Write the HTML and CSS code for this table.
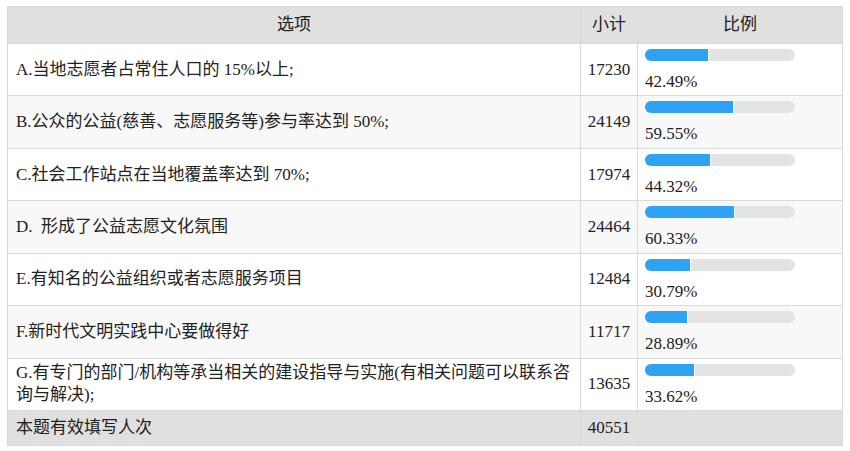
FILE: index.html
```html
<!DOCTYPE html>
<html lang="zh-CN">
<head>
<meta charset="utf-8">
<title>统计</title>
<link rel="stylesheet" href="styles.css">
</head>
<body>
<div class="wrap">
<table class="stat">
  <colgroup>
    <col class="c-opt">
    <col class="c-num">
    <col class="c-ratio">
  </colgroup>
  <thead>
    <tr><th>选项</th><th>小计</th><th>比例</th></tr>
  </thead>
  <tbody>
    <tr>
      <td class="opt">A.当地志愿者占常住人口的 15%以上;</td>
      <td class="num">17230</td>
      <td class="ratio"><div class="bar"><div class="fill" style="width:42.49%"></div></div><div class="pct">42.49%</div></td>
    </tr>
    <tr class="alt">
      <td class="opt">B.公众的公益(慈善、志愿服务等)参与率达到 50%;</td>
      <td class="num">24149</td>
      <td class="ratio"><div class="bar"><div class="fill" style="width:59.55%"></div></div><div class="pct">59.55%</div></td>
    </tr>
    <tr>
      <td class="opt">C.社会工作站点在当地覆盖率达到 70%;</td>
      <td class="num">17974</td>
      <td class="ratio"><div class="bar"><div class="fill" style="width:44.32%"></div></div><div class="pct">44.32%</div></td>
    </tr>
    <tr class="alt">
      <td class="opt">D.&nbsp; 形成了公益志愿文化氛围</td>
      <td class="num">24464</td>
      <td class="ratio"><div class="bar"><div class="fill" style="width:60.33%"></div></div><div class="pct">60.33%</div></td>
    </tr>
    <tr>
      <td class="opt">E.有知名的公益组织或者志愿服务项目</td>
      <td class="num">12484</td>
      <td class="ratio"><div class="bar"><div class="fill" style="width:30.79%"></div></div><div class="pct">30.79%</div></td>
    </tr>
    <tr class="alt">
      <td class="opt">F.新时代文明实践中心要做得好</td>
      <td class="num">11717</td>
      <td class="ratio"><div class="bar"><div class="fill" style="width:28.89%"></div></div><div class="pct">28.89%</div></td>
    </tr>
    <tr>
      <td class="opt">G.有专门的部门/机构等承当相关的建设指导与实施(有相关问题可以联系咨询与解决);</td>
      <td class="num">13635</td>
      <td class="ratio"><div class="bar"><div class="fill" style="width:33.62%"></div></div><div class="pct">33.62%</div></td>
    </tr>
  </tbody>
  <tfoot>
    <tr><td class="opt">本题有效填写人次</td><td class="num">40551</td><td></td></tr>
  </tfoot>
</table>
</div>
</body>
</html>
```
FILE: styles.css
```css
html, body {
  margin: 0;
  padding: 0;
  background: #fff;
}
.wrap {
  padding: 6px 7px;
}
.stat {
  width: 100%;
  border-collapse: collapse;
  table-layout: fixed;
  font-family: "Liberation Serif", "Noto Sans CJK SC", serif;
  font-size: 17px;
  color: #222;
}
.c-opt { width: 573px; }
.c-num { width: 57px; }
.c-ratio { width: auto; }
.stat th, .stat td {
  border: 1px solid #d9d9d9;
  padding: 0 8px;
  line-height: 22px;
  text-align: left;
  vertical-align: middle;
}
.stat th {
  background: #e0e0e0;
  font-weight: normal;
  text-align: center;
  height: 36px;
}
.stat tr.alt td {
  background: #f8f8f8;
}
.stat .num {
  text-align: center;
  padding: 0;
}
.stat .ratio {
  padding: 5px 7px 2.43px;
}
.bar {
  width: 150px;
  height: 12px;
  border-radius: 6px;
  background: #e2e3e5;
  overflow: hidden;
  margin-bottom: 10px;
}
.fill {
  height: 100%;
  background: #2ea2f3;
  border-right: 1px solid #fff;
  box-sizing: border-box;
}
.pct {
  line-height: 22px;
}
.stat tfoot td {
  background: #e0e0e0;
  height: 34px;
}
```
